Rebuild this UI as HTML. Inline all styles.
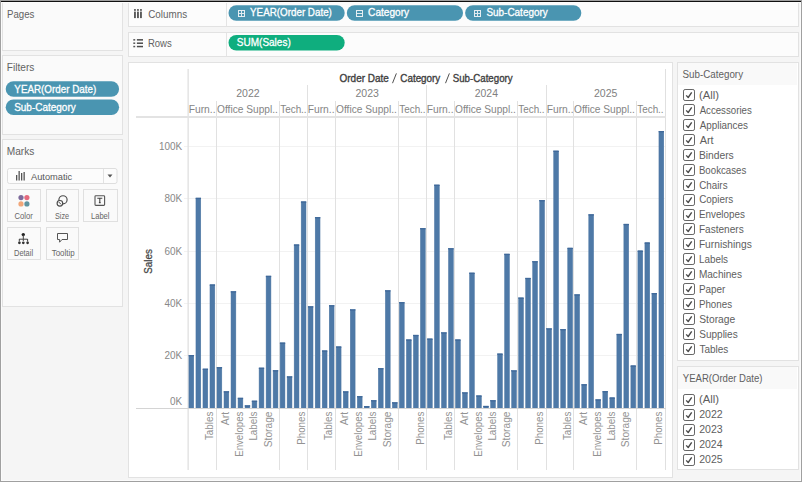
<!DOCTYPE html>
<html><head><meta charset="utf-8"><style>
html,body{margin:0;padding:0;width:802px;height:482px;overflow:hidden;background:#f4f4f4}
svg{display:block;font-family:"Liberation Sans", sans-serif}
</style></head><body>
<svg width="802" height="482" viewBox="0 0 802 482">
<rect x="0" y="0" width="802" height="482" fill="#f5f5f5" />
<rect x="2.5" y="2.5" width="120" height="48" fill="#fafafa" stroke="#e2e2e2" stroke-width="1"/>
<rect x="2.5" y="55.5" width="120" height="79" fill="#fafafa" stroke="#e2e2e2" stroke-width="1"/>
<rect x="2.5" y="139.5" width="120" height="167" fill="#fafafa" stroke="#e2e2e2" stroke-width="1"/>
<rect x="128.5" y="2.5" width="670" height="24" fill="#fcfcfc" stroke="#e2e2e2" stroke-width="1"/>
<rect x="128.5" y="32.5" width="670" height="24" fill="#fcfcfc" stroke="#e2e2e2" stroke-width="1"/>
<rect x="128.5" y="62.5" width="544" height="415" fill="#ffffff" stroke="#e2e2e2" stroke-width="1"/>
<rect x="677.5" y="62.5" width="121" height="298" fill="#ffffff" stroke="#e2e2e2" stroke-width="1"/>
<rect x="677.5" y="366.5" width="121" height="103" fill="#ffffff" stroke="#e2e2e2" stroke-width="1"/>
<rect x="678" y="63" width="119" height="22" fill="#f9f9f9" />
<rect x="678" y="367" width="119" height="22" fill="#f9f9f9" />
<rect x="226" y="3" width="1" height="23" fill="#e4e4e4" />
<rect x="226" y="33" width="1" height="23" fill="#e4e4e4" />
<rect x="0" y="2" width="802" height="1" fill="#fcfcfc" />
<rect x="0" y="0" width="802" height="1" fill="#a0a0a0" />
<rect x="0" y="1" width="802" height="1" fill="#101010" />
<rect x="0" y="0" width="1" height="482" fill="#a0a0a0" />
<rect x="801" y="0" width="1" height="482" fill="#a0a0a0" />
<rect x="0" y="481" width="802" height="1" fill="#a0a0a0" />
<rect x="1" y="2" width="1" height="479" fill="#fbfbfb" />
<rect x="800" y="2" width="1" height="479" fill="#fbfbfb" />
<rect x="1" y="480" width="800" height="1" fill="#fbfbfb" />
<text x="6.98" y="17.6" font-size="10.8" fill="#626262" font-weight="normal" textLength="27.37" lengthAdjust="spacingAndGlyphs"  >Pages</text>
<text x="6.79" y="71.4" font-size="10.8" fill="#626262" font-weight="normal" textLength="27.59" lengthAdjust="spacingAndGlyphs"  >Filters</text>
<text x="6.79" y="155.1" font-size="10.8" fill="#626262" font-weight="normal" textLength="27.59" lengthAdjust="spacingAndGlyphs"  >Marks</text>
<text x="148.21" y="17.6" font-size="10.8" fill="#626262" font-weight="normal" textLength="38.85" lengthAdjust="spacingAndGlyphs"  >Columns</text>
<text x="147.94" y="47.3" font-size="10.8" fill="#626262" font-weight="normal" textLength="23.80" lengthAdjust="spacingAndGlyphs"  >Rows</text>
<rect x="134" y="9.1" width="1.9" height="1.7" fill="#5a5a5a" />
<rect x="134" y="11.6" width="1.9" height="6.5" fill="#5a5a5a" />
<rect x="137" y="9.1" width="1.9" height="1.7" fill="#5a5a5a" />
<rect x="137" y="11.6" width="1.9" height="6.5" fill="#5a5a5a" />
<rect x="140" y="9.1" width="1.9" height="1.7" fill="#5a5a5a" />
<rect x="140" y="11.6" width="1.9" height="6.5" fill="#5a5a5a" />
<rect x="133.3" y="39.1" width="1.9" height="1.5" fill="#555" />
<rect x="136.9" y="39.1" width="6.1" height="1.5" fill="#4a4a4a" />
<rect x="133.3" y="42.45" width="1.9" height="1.5" fill="#555" />
<rect x="136.9" y="42.45" width="6.1" height="1.5" fill="#4a4a4a" />
<rect x="133.3" y="45.800000000000004" width="1.9" height="1.5" fill="#555" />
<rect x="136.9" y="45.800000000000004" width="6.1" height="1.5" fill="#4a4a4a" />
<rect x="228.5" y="5.2" width="116.2" height="15.5" rx="7.75" ry="7.75" fill="#4a95b1"/>
<rect x="238.5" y="10.5" width="6" height="6" fill="none" stroke="#e6eef2" stroke-width="1" shape-rendering="crispEdges"/>
<rect x="239" y="13" width="5" height="1" fill="#dfeaf0" shape-rendering="crispEdges"/>
<rect x="241" y="11" width="1" height="5" fill="#dfeaf0" shape-rendering="crispEdges"/>
<text x="250.05" y="16.2" font-size="10.6" fill="#fff" font-weight="normal" textLength="81.84" lengthAdjust="spacingAndGlyphs" stroke="#fff" stroke-width="0.3" >YEAR(Order Date)</text>
<rect x="346.8" y="5.2" width="116.2" height="15.5" rx="7.75" ry="7.75" fill="#4a95b1"/>
<rect x="356.5" y="10.5" width="6" height="6" fill="none" stroke="#e6eef2" stroke-width="1" shape-rendering="crispEdges"/>
<rect x="357" y="13" width="5" height="1" fill="#dfeaf0" shape-rendering="crispEdges"/>
<text x="368.09" y="16.2" font-size="10.6" fill="#fff" font-weight="normal" textLength="41.03" lengthAdjust="spacingAndGlyphs" stroke="#fff" stroke-width="0.3" >Category</text>
<rect x="465.1" y="5.2" width="116.2" height="15.5" rx="7.75" ry="7.75" fill="#4a95b1"/>
<rect x="474.5" y="10.5" width="6" height="6" fill="none" stroke="#e6eef2" stroke-width="1" shape-rendering="crispEdges"/>
<rect x="475" y="13" width="5" height="1" fill="#dfeaf0" shape-rendering="crispEdges"/>
<rect x="477" y="11" width="1" height="5" fill="#dfeaf0" shape-rendering="crispEdges"/>
<text x="486.45" y="16.2" font-size="10.6" fill="#fff" font-weight="normal" textLength="61.30" lengthAdjust="spacingAndGlyphs" stroke="#fff" stroke-width="0.3" >Sub-Category</text>
<rect x="228.5" y="34.9" width="116.2" height="15.6" rx="7.8" ry="7.8" fill="#0fae7e"/>
<text x="236.85" y="46.2" font-size="10.6" fill="#fff" font-weight="normal" textLength="53.90" lengthAdjust="spacingAndGlyphs" stroke="#fff" stroke-width="0.3" >SUM(Sales)</text>
<rect x="5.7" y="81.3" width="113.4" height="15.5" rx="7.75" ry="7.75" fill="#4a95b1"/>
<text x="14.35" y="92.6" font-size="10.6" fill="#fff" font-weight="normal" textLength="81.84" lengthAdjust="spacingAndGlyphs" stroke="#fff" stroke-width="0.3" >YEAR(Order Date)</text>
<rect x="5.7" y="99.6" width="113.4" height="15.4" rx="7.7" ry="7.7" fill="#4a95b1"/>
<text x="14.15" y="110.9" font-size="10.6" fill="#fff" font-weight="normal" textLength="61.60" lengthAdjust="spacingAndGlyphs" stroke="#fff" stroke-width="0.3" >Sub-Category</text>
<rect x="7.5" y="168.5" width="109.5" height="15" rx="2" fill="#fcfcfc" stroke="#dedede"/>
<rect x="103" y="169" width="1" height="14" fill="#e2e2e2" />
<path d="M107.5 174.5 L112.5 174.5 L110 177.5 Z" fill="#555"/>
<rect x="16" y="175" width="1.3" height="5.5" fill="#555" />
<rect x="18.5" y="171" width="1.3" height="9.5" fill="#555" />
<rect x="21" y="173" width="1.3" height="7.5" fill="#555" />
<rect x="23.5" y="172" width="1.3" height="8.5" fill="#555" />
<text x="30.95" y="180.1" font-size="9.7" fill="#595959" font-weight="normal" textLength="41.29" lengthAdjust="spacingAndGlyphs"  >Automatic</text>
<rect x="7.5" y="189.5" width="33" height="32" fill="#fafafa" stroke="#e0e0e0"/>
<rect x="46.5" y="189.5" width="32" height="32" fill="#fafafa" stroke="#e0e0e0"/>
<rect x="83.5" y="189.5" width="34" height="32" fill="#fafafa" stroke="#e0e0e0"/>
<rect x="7.5" y="227.5" width="33" height="32" fill="#fafafa" stroke="#e0e0e0"/>
<rect x="46.5" y="227.5" width="32" height="32" fill="#fafafa" stroke="#e0e0e0"/>
<text x="14.62" y="218.5" font-size="8.6" fill="#666" font-weight="normal" textLength="18.23" lengthAdjust="spacingAndGlyphs"  >Color</text>
<text x="54.97" y="218.5" font-size="8.6" fill="#666" font-weight="normal" textLength="14.16" lengthAdjust="spacingAndGlyphs"  >Size</text>
<text x="90.99" y="218.5" font-size="8.6" fill="#666" font-weight="normal" textLength="18.51" lengthAdjust="spacingAndGlyphs"  >Label</text>
<text x="14.00" y="255.8" font-size="8.6" fill="#666" font-weight="normal" textLength="19.10" lengthAdjust="spacingAndGlyphs"  >Detail</text>
<text x="51.70" y="255.8" font-size="8.6" fill="#666" font-weight="normal" textLength="22.92" lengthAdjust="spacingAndGlyphs"  >Tooltip</text>
<circle cx="21" cy="197.6" r="2.6" fill="#7d6a9b"/>
<circle cx="26.9" cy="197.6" r="2.6" fill="#e46a7e"/>
<circle cx="21" cy="203.9" r="2.6" fill="#f1a77a"/>
<circle cx="26.9" cy="203.9" r="2.6" fill="#5f939f"/>
<circle cx="63" cy="199.8" r="4.1" fill="none" stroke="#4a4a4a" stroke-width="1.15"/>
<circle cx="59.9" cy="203.3" r="2.8" fill="#fafafa" stroke="#4a4a4a" stroke-width="1.15"/>
<path d="M58.6 201.9 L61.1 204.4" stroke="#4a4a4a" stroke-width="1"/>
<rect x="95" y="195.8" width="9.6" height="9.6" rx="0.8" fill="none" stroke="#555" stroke-width="1.1"/>
<path d="M97.3 198.3 H102.3 M99.8 198.3 V202.6 M98.9 202.6 H100.7" stroke="#444" stroke-width="1.1" fill="none"/>
<circle cx="23.3" cy="234.6" r="1.7" fill="#222"/>
<path d="M23.3 235 V241 M19.2 239.2 H27.6 M19.3 239 V241.5 M27.6 239 V241.5" stroke="#444" stroke-width="1.0" fill="none"/>
<circle cx="19.4" cy="242.8" r="1.35" fill="#333"/>
<circle cx="23.3" cy="242.8" r="1.35" fill="#333"/>
<circle cx="27.6" cy="242.8" r="1.35" fill="#333"/>
<path d="M57.5 233.5 H67.5 V239.5 H62 L59.6 242.2 V239.5 H57.5 Z" fill="none" stroke="#555" stroke-width="1" stroke-linejoin="round"/>
<rect x="184" y="355" width="481" height="1" fill="#f2f2f2" />
<rect x="184" y="303" width="481" height="1" fill="#f2f2f2" />
<rect x="184" y="251" width="481" height="1" fill="#f2f2f2" />
<rect x="184" y="198" width="481" height="1" fill="#f2f2f2" />
<rect x="184" y="146" width="481" height="1" fill="#f2f2f2" />
<rect x="187.5" y="69" width="1.3" height="401" fill="#e0e0e0" />
<rect x="665" y="69" width="1" height="401" fill="#e0e0e0" />
<rect x="307" y="85" width="1" height="385" fill="#e1e1e1" />
<rect x="426" y="85" width="1" height="385" fill="#e1e1e1" />
<rect x="546" y="85" width="1" height="385" fill="#e1e1e1" />
<rect x="216" y="101" width="1" height="369" fill="#e1e1e1" />
<rect x="279" y="101" width="1" height="369" fill="#e1e1e1" />
<rect x="335" y="101" width="1" height="369" fill="#e1e1e1" />
<rect x="398" y="101" width="1" height="369" fill="#e1e1e1" />
<rect x="454" y="101" width="1" height="369" fill="#e1e1e1" />
<rect x="517" y="101" width="1" height="369" fill="#e1e1e1" />
<rect x="573" y="101" width="1" height="369" fill="#e1e1e1" />
<rect x="636" y="101" width="1" height="369" fill="#e1e1e1" />
<rect x="136" y="116" width="530" height="2" fill="#e3e3e3" />
<rect x="188.95" y="355.25" width="4.8" height="53.00" fill="#4e79a7" stroke="#4a74a2" stroke-width="0.5"/>
<rect x="188.70" y="355.0" width="5.3" height="1.3" fill="#40699a"/>
<rect x="195.96" y="198.05" width="4.8" height="210.20" fill="#4e79a7" stroke="#4a74a2" stroke-width="0.5"/>
<rect x="195.71" y="197.8" width="5.3" height="1.3" fill="#40699a"/>
<rect x="202.98" y="368.95" width="4.8" height="39.30" fill="#4e79a7" stroke="#4a74a2" stroke-width="0.5"/>
<rect x="202.73" y="368.7" width="5.3" height="1.3" fill="#40699a"/>
<rect x="209.99" y="284.75" width="4.8" height="123.50" fill="#4e79a7" stroke="#4a74a2" stroke-width="0.5"/>
<rect x="209.74" y="284.5" width="5.3" height="1.3" fill="#40699a"/>
<rect x="217.01" y="367.35" width="4.8" height="40.90" fill="#4e79a7" stroke="#4a74a2" stroke-width="0.5"/>
<rect x="216.76" y="367.1" width="5.3" height="1.3" fill="#40699a"/>
<rect x="224.02" y="391.55" width="4.8" height="16.70" fill="#4e79a7" stroke="#4a74a2" stroke-width="0.5"/>
<rect x="223.77" y="391.3" width="5.3" height="1.3" fill="#40699a"/>
<rect x="231.04" y="291.55" width="4.8" height="116.70" fill="#4e79a7" stroke="#4a74a2" stroke-width="0.5"/>
<rect x="230.79" y="291.3" width="5.3" height="1.3" fill="#40699a"/>
<rect x="238.05" y="398.05" width="4.8" height="10.20" fill="#4e79a7" stroke="#4a74a2" stroke-width="0.5"/>
<rect x="237.80" y="397.8" width="5.3" height="1.3" fill="#40699a"/>
<rect x="245.07" y="405.65" width="4.8" height="2.60" fill="#4e79a7" stroke="#4a74a2" stroke-width="0.5"/>
<rect x="244.82" y="405.4" width="5.3" height="1.3" fill="#40699a"/>
<rect x="252.08" y="400.95" width="4.8" height="7.30" fill="#4e79a7" stroke="#4a74a2" stroke-width="0.5"/>
<rect x="251.83" y="400.7" width="5.3" height="1.3" fill="#40699a"/>
<rect x="259.10" y="367.95" width="4.8" height="40.30" fill="#4e79a7" stroke="#4a74a2" stroke-width="0.5"/>
<rect x="258.85" y="367.7" width="5.3" height="1.3" fill="#40699a"/>
<rect x="266.12" y="276.05" width="4.8" height="132.20" fill="#4e79a7" stroke="#4a74a2" stroke-width="0.5"/>
<rect x="265.87" y="275.8" width="5.3" height="1.3" fill="#40699a"/>
<rect x="273.13" y="370.45" width="4.8" height="37.80" fill="#4e79a7" stroke="#4a74a2" stroke-width="0.5"/>
<rect x="272.88" y="370.2" width="5.3" height="1.3" fill="#40699a"/>
<rect x="280.14" y="342.85" width="4.8" height="65.40" fill="#4e79a7" stroke="#4a74a2" stroke-width="0.5"/>
<rect x="279.89" y="342.6" width="5.3" height="1.3" fill="#40699a"/>
<rect x="287.16" y="376.65" width="4.8" height="31.60" fill="#4e79a7" stroke="#4a74a2" stroke-width="0.5"/>
<rect x="286.91" y="376.4" width="5.3" height="1.3" fill="#40699a"/>
<rect x="294.17" y="244.75" width="4.8" height="163.50" fill="#4e79a7" stroke="#4a74a2" stroke-width="0.5"/>
<rect x="293.92" y="244.5" width="5.3" height="1.3" fill="#40699a"/>
<rect x="301.19" y="201.75" width="4.8" height="206.50" fill="#4e79a7" stroke="#4a74a2" stroke-width="0.5"/>
<rect x="300.94" y="201.5" width="5.3" height="1.3" fill="#40699a"/>
<rect x="308.20" y="306.55" width="4.8" height="101.70" fill="#4e79a7" stroke="#4a74a2" stroke-width="0.5"/>
<rect x="307.95" y="306.3" width="5.3" height="1.3" fill="#40699a"/>
<rect x="315.22" y="217.35" width="4.8" height="190.90" fill="#4e79a7" stroke="#4a74a2" stroke-width="0.5"/>
<rect x="314.97" y="217.1" width="5.3" height="1.3" fill="#40699a"/>
<rect x="322.24" y="350.75" width="4.8" height="57.50" fill="#4e79a7" stroke="#4a74a2" stroke-width="0.5"/>
<rect x="321.99" y="350.5" width="5.3" height="1.3" fill="#40699a"/>
<rect x="329.25" y="305.45" width="4.8" height="102.80" fill="#4e79a7" stroke="#4a74a2" stroke-width="0.5"/>
<rect x="329.00" y="305.2" width="5.3" height="1.3" fill="#40699a"/>
<rect x="336.26" y="346.75" width="4.8" height="61.50" fill="#4e79a7" stroke="#4a74a2" stroke-width="0.5"/>
<rect x="336.01" y="346.5" width="5.3" height="1.3" fill="#40699a"/>
<rect x="343.28" y="391.65" width="4.8" height="16.60" fill="#4e79a7" stroke="#4a74a2" stroke-width="0.5"/>
<rect x="343.03" y="391.4" width="5.3" height="1.3" fill="#40699a"/>
<rect x="350.29" y="309.65" width="4.8" height="98.60" fill="#4e79a7" stroke="#4a74a2" stroke-width="0.5"/>
<rect x="350.04" y="309.4" width="5.3" height="1.3" fill="#40699a"/>
<rect x="357.31" y="396.35" width="4.8" height="11.90" fill="#4e79a7" stroke="#4a74a2" stroke-width="0.5"/>
<rect x="357.06" y="396.1" width="5.3" height="1.3" fill="#40699a"/>
<rect x="364.32" y="406.35" width="4.8" height="1.90" fill="#4e79a7" stroke="#4a74a2" stroke-width="0.5"/>
<rect x="364.07" y="406.1" width="5.3" height="1.3" fill="#40699a"/>
<rect x="371.34" y="400.45" width="4.8" height="7.80" fill="#4e79a7" stroke="#4a74a2" stroke-width="0.5"/>
<rect x="371.09" y="400.2" width="5.3" height="1.3" fill="#40699a"/>
<rect x="378.36" y="368.35" width="4.8" height="39.90" fill="#4e79a7" stroke="#4a74a2" stroke-width="0.5"/>
<rect x="378.11" y="368.1" width="5.3" height="1.3" fill="#40699a"/>
<rect x="385.37" y="290.55" width="4.8" height="117.70" fill="#4e79a7" stroke="#4a74a2" stroke-width="0.5"/>
<rect x="385.12" y="290.3" width="5.3" height="1.3" fill="#40699a"/>
<rect x="392.38" y="402.55" width="4.8" height="5.70" fill="#4e79a7" stroke="#4a74a2" stroke-width="0.5"/>
<rect x="392.13" y="402.3" width="5.3" height="1.3" fill="#40699a"/>
<rect x="399.40" y="302.35" width="4.8" height="105.90" fill="#4e79a7" stroke="#4a74a2" stroke-width="0.5"/>
<rect x="399.15" y="302.1" width="5.3" height="1.3" fill="#40699a"/>
<rect x="406.41" y="339.75" width="4.8" height="68.50" fill="#4e79a7" stroke="#4a74a2" stroke-width="0.5"/>
<rect x="406.16" y="339.5" width="5.3" height="1.3" fill="#40699a"/>
<rect x="413.43" y="335.15" width="4.8" height="73.10" fill="#4e79a7" stroke="#4a74a2" stroke-width="0.5"/>
<rect x="413.18" y="334.9" width="5.3" height="1.3" fill="#40699a"/>
<rect x="420.44" y="228.35" width="4.8" height="179.90" fill="#4e79a7" stroke="#4a74a2" stroke-width="0.5"/>
<rect x="420.19" y="228.1" width="5.3" height="1.3" fill="#40699a"/>
<rect x="427.46" y="338.85" width="4.8" height="69.40" fill="#4e79a7" stroke="#4a74a2" stroke-width="0.5"/>
<rect x="427.21" y="338.6" width="5.3" height="1.3" fill="#40699a"/>
<rect x="434.47" y="184.95" width="4.8" height="223.30" fill="#4e79a7" stroke="#4a74a2" stroke-width="0.5"/>
<rect x="434.22" y="184.7" width="5.3" height="1.3" fill="#40699a"/>
<rect x="441.49" y="332.65" width="4.8" height="75.60" fill="#4e79a7" stroke="#4a74a2" stroke-width="0.5"/>
<rect x="441.24" y="332.4" width="5.3" height="1.3" fill="#40699a"/>
<rect x="448.50" y="248.45" width="4.8" height="159.80" fill="#4e79a7" stroke="#4a74a2" stroke-width="0.5"/>
<rect x="448.25" y="248.2" width="5.3" height="1.3" fill="#40699a"/>
<rect x="455.52" y="339.75" width="4.8" height="68.50" fill="#4e79a7" stroke="#4a74a2" stroke-width="0.5"/>
<rect x="455.27" y="339.5" width="5.3" height="1.3" fill="#40699a"/>
<rect x="462.53" y="392.65" width="4.8" height="15.60" fill="#4e79a7" stroke="#4a74a2" stroke-width="0.5"/>
<rect x="462.28" y="392.4" width="5.3" height="1.3" fill="#40699a"/>
<rect x="469.55" y="272.95" width="4.8" height="135.30" fill="#4e79a7" stroke="#4a74a2" stroke-width="0.5"/>
<rect x="469.30" y="272.7" width="5.3" height="1.3" fill="#40699a"/>
<rect x="476.56" y="395.75" width="4.8" height="12.50" fill="#4e79a7" stroke="#4a74a2" stroke-width="0.5"/>
<rect x="476.31" y="395.5" width="5.3" height="1.3" fill="#40699a"/>
<rect x="483.58" y="406.15" width="4.8" height="2.10" fill="#4e79a7" stroke="#4a74a2" stroke-width="0.5"/>
<rect x="483.33" y="405.9" width="5.3" height="1.3" fill="#40699a"/>
<rect x="490.59" y="400.45" width="4.8" height="7.80" fill="#4e79a7" stroke="#4a74a2" stroke-width="0.5"/>
<rect x="490.34" y="400.2" width="5.3" height="1.3" fill="#40699a"/>
<rect x="497.61" y="353.85" width="4.8" height="54.40" fill="#4e79a7" stroke="#4a74a2" stroke-width="0.5"/>
<rect x="497.36" y="353.6" width="5.3" height="1.3" fill="#40699a"/>
<rect x="504.62" y="254.05" width="4.8" height="154.20" fill="#4e79a7" stroke="#4a74a2" stroke-width="0.5"/>
<rect x="504.38" y="253.8" width="5.3" height="1.3" fill="#40699a"/>
<rect x="511.64" y="370.65" width="4.8" height="37.60" fill="#4e79a7" stroke="#4a74a2" stroke-width="0.5"/>
<rect x="511.39" y="370.4" width="5.3" height="1.3" fill="#40699a"/>
<rect x="518.65" y="297.85" width="4.8" height="110.40" fill="#4e79a7" stroke="#4a74a2" stroke-width="0.5"/>
<rect x="518.40" y="297.6" width="5.3" height="1.3" fill="#40699a"/>
<rect x="525.67" y="278.15" width="4.8" height="130.10" fill="#4e79a7" stroke="#4a74a2" stroke-width="0.5"/>
<rect x="525.42" y="277.9" width="5.3" height="1.3" fill="#40699a"/>
<rect x="532.68" y="261.45" width="4.8" height="146.80" fill="#4e79a7" stroke="#4a74a2" stroke-width="0.5"/>
<rect x="532.43" y="261.2" width="5.3" height="1.3" fill="#40699a"/>
<rect x="539.70" y="200.35" width="4.8" height="207.90" fill="#4e79a7" stroke="#4a74a2" stroke-width="0.5"/>
<rect x="539.45" y="200.1" width="5.3" height="1.3" fill="#40699a"/>
<rect x="546.71" y="328.65" width="4.8" height="79.60" fill="#4e79a7" stroke="#4a74a2" stroke-width="0.5"/>
<rect x="546.46" y="328.4" width="5.3" height="1.3" fill="#40699a"/>
<rect x="553.73" y="150.95" width="4.8" height="257.30" fill="#4e79a7" stroke="#4a74a2" stroke-width="0.5"/>
<rect x="553.48" y="150.7" width="5.3" height="1.3" fill="#40699a"/>
<rect x="560.74" y="329.35" width="4.8" height="78.90" fill="#4e79a7" stroke="#4a74a2" stroke-width="0.5"/>
<rect x="560.49" y="329.1" width="5.3" height="1.3" fill="#40699a"/>
<rect x="567.76" y="248.05" width="4.8" height="160.20" fill="#4e79a7" stroke="#4a74a2" stroke-width="0.5"/>
<rect x="567.51" y="247.8" width="5.3" height="1.3" fill="#40699a"/>
<rect x="574.77" y="294.65" width="4.8" height="113.60" fill="#4e79a7" stroke="#4a74a2" stroke-width="0.5"/>
<rect x="574.52" y="294.4" width="5.3" height="1.3" fill="#40699a"/>
<rect x="581.79" y="384.45" width="4.8" height="23.80" fill="#4e79a7" stroke="#4a74a2" stroke-width="0.5"/>
<rect x="581.54" y="384.2" width="5.3" height="1.3" fill="#40699a"/>
<rect x="588.80" y="214.55" width="4.8" height="193.70" fill="#4e79a7" stroke="#4a74a2" stroke-width="0.5"/>
<rect x="588.55" y="214.3" width="5.3" height="1.3" fill="#40699a"/>
<rect x="595.82" y="399.65" width="4.8" height="8.60" fill="#4e79a7" stroke="#4a74a2" stroke-width="0.5"/>
<rect x="595.57" y="399.4" width="5.3" height="1.3" fill="#40699a"/>
<rect x="602.84" y="391.35" width="4.8" height="16.90" fill="#4e79a7" stroke="#4a74a2" stroke-width="0.5"/>
<rect x="602.59" y="391.1" width="5.3" height="1.3" fill="#40699a"/>
<rect x="609.85" y="397.75" width="4.8" height="10.50" fill="#4e79a7" stroke="#4a74a2" stroke-width="0.5"/>
<rect x="609.60" y="397.5" width="5.3" height="1.3" fill="#40699a"/>
<rect x="616.87" y="334.15" width="4.8" height="74.10" fill="#4e79a7" stroke="#4a74a2" stroke-width="0.5"/>
<rect x="616.62" y="333.9" width="5.3" height="1.3" fill="#40699a"/>
<rect x="623.88" y="224.15" width="4.8" height="184.10" fill="#4e79a7" stroke="#4a74a2" stroke-width="0.5"/>
<rect x="623.63" y="223.9" width="5.3" height="1.3" fill="#40699a"/>
<rect x="630.89" y="365.75" width="4.8" height="42.50" fill="#4e79a7" stroke="#4a74a2" stroke-width="0.5"/>
<rect x="630.64" y="365.5" width="5.3" height="1.3" fill="#40699a"/>
<rect x="637.91" y="250.85" width="4.8" height="157.40" fill="#4e79a7" stroke="#4a74a2" stroke-width="0.5"/>
<rect x="637.66" y="250.6" width="5.3" height="1.3" fill="#40699a"/>
<rect x="644.92" y="242.75" width="4.8" height="165.50" fill="#4e79a7" stroke="#4a74a2" stroke-width="0.5"/>
<rect x="644.67" y="242.5" width="5.3" height="1.3" fill="#40699a"/>
<rect x="651.94" y="293.25" width="4.8" height="115.00" fill="#4e79a7" stroke="#4a74a2" stroke-width="0.5"/>
<rect x="651.69" y="293.0" width="5.3" height="1.3" fill="#40699a"/>
<rect x="658.95" y="131.25" width="4.8" height="277.00" fill="#4e79a7" stroke="#4a74a2" stroke-width="0.5"/>
<rect x="658.70" y="131.0" width="5.3" height="1.3" fill="#40699a"/>
<rect x="136" y="408" width="530" height="1" fill="#d4d4d4" />
<text x="170.07" y="404.8" font-size="10.6" fill="#888" font-weight="normal" textLength="12.16" lengthAdjust="spacingAndGlyphs"  >0K</text>
<text x="164.56" y="358.75" font-size="10.6" fill="#888" font-weight="normal" textLength="17.69" lengthAdjust="spacingAndGlyphs"  >20K</text>
<text x="164.56" y="306.75" font-size="10.6" fill="#888" font-weight="normal" textLength="17.69" lengthAdjust="spacingAndGlyphs"  >40K</text>
<text x="164.56" y="254.75" font-size="10.6" fill="#888" font-weight="normal" textLength="17.69" lengthAdjust="spacingAndGlyphs"  >60K</text>
<text x="164.56" y="201.75" font-size="10.6" fill="#888" font-weight="normal" textLength="17.69" lengthAdjust="spacingAndGlyphs"  >80K</text>
<text x="158.99" y="149.75" font-size="10.6" fill="#888" font-weight="normal" textLength="23.21" lengthAdjust="spacingAndGlyphs"  >100K</text>
<text x="339.55" y="81.5" font-size="10.6" fill="#404040" font-weight="normal" textLength="49.31" lengthAdjust="spacingAndGlyphs" stroke="#404040" stroke-width="0.35" >Order Date</text>
<text x="400.31" y="81.5" font-size="10.6" fill="#404040" font-weight="normal" textLength="40.02" lengthAdjust="spacingAndGlyphs" stroke="#404040" stroke-width="0.35" >Category</text>
<text x="452.76" y="81.5" font-size="10.6" fill="#404040" font-weight="normal" textLength="59.89" lengthAdjust="spacingAndGlyphs" stroke="#404040" stroke-width="0.35" >Sub-Category</text>
<path d="M392.5 83.2 L396.4 73.4 M445.5 83.2 L449.4 73.4" stroke="#505050" stroke-width="1.0" fill="none"/>
<text x="236.20" y="97.0" font-size="10.2" fill="#808080" font-weight="normal" textLength="23.45" lengthAdjust="spacingAndGlyphs"  >2022</text>
<text x="188.68" y="113.0" font-size="10.8" fill="#858585" font-weight="normal" textLength="26.87" lengthAdjust="spacingAndGlyphs"  >Furn..</text>
<text x="217.04" y="113.0" font-size="10.8" fill="#858585" font-weight="normal" textLength="60.82" lengthAdjust="spacingAndGlyphs"  >Office Suppl..</text>
<text x="280.25" y="113.0" font-size="10.8" fill="#858585" font-weight="normal" textLength="26.37" lengthAdjust="spacingAndGlyphs"  >Tech..</text>
<text x="355.45" y="97.0" font-size="10.2" fill="#808080" font-weight="normal" textLength="23.40" lengthAdjust="spacingAndGlyphs"  >2023</text>
<text x="307.68" y="113.0" font-size="10.8" fill="#858585" font-weight="normal" textLength="26.87" lengthAdjust="spacingAndGlyphs"  >Furn..</text>
<text x="336.04" y="113.0" font-size="10.8" fill="#858585" font-weight="normal" textLength="60.82" lengthAdjust="spacingAndGlyphs"  >Office Suppl..</text>
<text x="399.25" y="113.0" font-size="10.8" fill="#858585" font-weight="normal" textLength="26.37" lengthAdjust="spacingAndGlyphs"  >Tech..</text>
<text x="474.72" y="97.0" font-size="10.2" fill="#808080" font-weight="normal" textLength="23.23" lengthAdjust="spacingAndGlyphs"  >2024</text>
<text x="426.68" y="113.0" font-size="10.8" fill="#858585" font-weight="normal" textLength="26.87" lengthAdjust="spacingAndGlyphs"  >Furn..</text>
<text x="455.04" y="113.0" font-size="10.8" fill="#858585" font-weight="normal" textLength="60.82" lengthAdjust="spacingAndGlyphs"  >Office Suppl..</text>
<text x="518.25" y="113.0" font-size="10.8" fill="#858585" font-weight="normal" textLength="26.37" lengthAdjust="spacingAndGlyphs"  >Tech..</text>
<text x="593.97" y="97.0" font-size="10.2" fill="#808080" font-weight="normal" textLength="23.34" lengthAdjust="spacingAndGlyphs"  >2025</text>
<text x="546.68" y="113.0" font-size="10.8" fill="#858585" font-weight="normal" textLength="26.87" lengthAdjust="spacingAndGlyphs"  >Furn..</text>
<text x="574.04" y="113.0" font-size="10.8" fill="#858585" font-weight="normal" textLength="60.82" lengthAdjust="spacingAndGlyphs"  >Office Suppl..</text>
<text x="637.25" y="113.0" font-size="10.8" fill="#858585" font-weight="normal" textLength="26.37" lengthAdjust="spacingAndGlyphs"  >Tech..</text>
<text transform="translate(213.10,440.05) rotate(-90)" font-size="10.3" fill="#939393" font-weight="normal" textLength="28.40" lengthAdjust="spacingAndGlyphs" >Tables</text>
<text transform="translate(229.20,425.15) rotate(-90)" font-size="10.3" fill="#939393" font-weight="normal" textLength="13.23" lengthAdjust="spacingAndGlyphs" >Art</text>
<text transform="translate(243.20,456.77) rotate(-90)" font-size="10.3" fill="#939393" font-weight="normal" textLength="45.11" lengthAdjust="spacingAndGlyphs" >Envelopes</text>
<text transform="translate(257.10,440.59) rotate(-90)" font-size="10.3" fill="#939393" font-weight="normal" textLength="28.95" lengthAdjust="spacingAndGlyphs" >Labels</text>
<text transform="translate(271.50,447.16) rotate(-90)" font-size="10.3" fill="#939393" font-weight="normal" textLength="35.64" lengthAdjust="spacingAndGlyphs" >Storage</text>
<text transform="translate(304.70,444.78) rotate(-90)" font-size="10.3" fill="#939393" font-weight="normal" textLength="33.14" lengthAdjust="spacingAndGlyphs" >Phones</text>
<text transform="translate(332.36,440.05) rotate(-90)" font-size="10.3" fill="#939393" font-weight="normal" textLength="28.40" lengthAdjust="spacingAndGlyphs" >Tables</text>
<text transform="translate(348.46,425.15) rotate(-90)" font-size="10.3" fill="#939393" font-weight="normal" textLength="13.23" lengthAdjust="spacingAndGlyphs" >Art</text>
<text transform="translate(362.46,456.77) rotate(-90)" font-size="10.3" fill="#939393" font-weight="normal" textLength="45.11" lengthAdjust="spacingAndGlyphs" >Envelopes</text>
<text transform="translate(376.36,440.59) rotate(-90)" font-size="10.3" fill="#939393" font-weight="normal" textLength="28.95" lengthAdjust="spacingAndGlyphs" >Labels</text>
<text transform="translate(390.76,447.16) rotate(-90)" font-size="10.3" fill="#939393" font-weight="normal" textLength="35.64" lengthAdjust="spacingAndGlyphs" >Storage</text>
<text transform="translate(423.96,444.78) rotate(-90)" font-size="10.3" fill="#939393" font-weight="normal" textLength="33.14" lengthAdjust="spacingAndGlyphs" >Phones</text>
<text transform="translate(451.62,440.05) rotate(-90)" font-size="10.3" fill="#939393" font-weight="normal" textLength="28.40" lengthAdjust="spacingAndGlyphs" >Tables</text>
<text transform="translate(467.72,425.15) rotate(-90)" font-size="10.3" fill="#939393" font-weight="normal" textLength="13.23" lengthAdjust="spacingAndGlyphs" >Art</text>
<text transform="translate(481.72,456.77) rotate(-90)" font-size="10.3" fill="#939393" font-weight="normal" textLength="45.11" lengthAdjust="spacingAndGlyphs" >Envelopes</text>
<text transform="translate(495.62,440.59) rotate(-90)" font-size="10.3" fill="#939393" font-weight="normal" textLength="28.95" lengthAdjust="spacingAndGlyphs" >Labels</text>
<text transform="translate(510.02,447.16) rotate(-90)" font-size="10.3" fill="#939393" font-weight="normal" textLength="35.64" lengthAdjust="spacingAndGlyphs" >Storage</text>
<text transform="translate(543.22,444.78) rotate(-90)" font-size="10.3" fill="#939393" font-weight="normal" textLength="33.14" lengthAdjust="spacingAndGlyphs" >Phones</text>
<text transform="translate(570.88,440.05) rotate(-90)" font-size="10.3" fill="#939393" font-weight="normal" textLength="28.40" lengthAdjust="spacingAndGlyphs" >Tables</text>
<text transform="translate(586.98,425.15) rotate(-90)" font-size="10.3" fill="#939393" font-weight="normal" textLength="13.23" lengthAdjust="spacingAndGlyphs" >Art</text>
<text transform="translate(600.98,456.77) rotate(-90)" font-size="10.3" fill="#939393" font-weight="normal" textLength="45.11" lengthAdjust="spacingAndGlyphs" >Envelopes</text>
<text transform="translate(614.88,440.59) rotate(-90)" font-size="10.3" fill="#939393" font-weight="normal" textLength="28.95" lengthAdjust="spacingAndGlyphs" >Labels</text>
<text transform="translate(629.28,447.16) rotate(-90)" font-size="10.3" fill="#939393" font-weight="normal" textLength="35.64" lengthAdjust="spacingAndGlyphs" >Storage</text>
<text transform="translate(662.48,444.78) rotate(-90)" font-size="10.3" fill="#939393" font-weight="normal" textLength="33.14" lengthAdjust="spacingAndGlyphs" >Phones</text>
<text transform="translate(151.60,273.64) rotate(-90)" font-size="10.6" fill="#4a4a4a" font-weight="normal" textLength="24.40" lengthAdjust="spacingAndGlyphs" stroke="#4a4a4a" stroke-width="0.3">Sales</text>
<text x="682.56" y="77.5" font-size="10.8" fill="#606060" font-weight="normal" textLength="60.49" lengthAdjust="spacingAndGlyphs"  >Sub-Category</text>
<text x="682.76" y="381.9" font-size="10.8" fill="#606060" font-weight="normal" textLength="79.72" lengthAdjust="spacingAndGlyphs"  >YEAR(Order Date)</text>
<rect x="683.5" y="89.5" width="11" height="11" rx="1.6" fill="#fff" stroke="#666" stroke-width="1"/>
<path d="M686.2 95.4 L688.2 97.5 L691.7 92.3" fill="none" stroke="#4a4a4a" stroke-width="1.35" stroke-linejoin="round"/>
<text x="699.02" y="98.9" font-size="10.8" fill="#5e5e5e" font-weight="normal" textLength="20.08" lengthAdjust="spacingAndGlyphs"  >(All)</text>
<rect x="683.5" y="104.5" width="11" height="11" rx="1.6" fill="#fff" stroke="#666" stroke-width="1"/>
<path d="M686.2 110.4 L688.2 112.5 L691.7 107.3" fill="none" stroke="#4a4a4a" stroke-width="1.35" stroke-linejoin="round"/>
<text x="699.65" y="113.84" font-size="10.8" fill="#5e5e5e" font-weight="normal" textLength="52.09" lengthAdjust="spacingAndGlyphs"  >Accessories</text>
<rect x="683.5" y="119.5" width="11" height="11" rx="1.6" fill="#fff" stroke="#666" stroke-width="1"/>
<path d="M686.2 125.4 L688.2 127.5 L691.7 122.3" fill="none" stroke="#4a4a4a" stroke-width="1.35" stroke-linejoin="round"/>
<text x="699.65" y="128.78" font-size="10.8" fill="#5e5e5e" font-weight="normal" textLength="48.32" lengthAdjust="spacingAndGlyphs"  >Appliances</text>
<rect x="683.5" y="134.5" width="11" height="11" rx="1.6" fill="#fff" stroke="#666" stroke-width="1"/>
<path d="M686.2 140.4 L688.2 142.5 L691.7 137.3" fill="none" stroke="#4a4a4a" stroke-width="1.35" stroke-linejoin="round"/>
<text x="699.65" y="143.72" font-size="10.8" fill="#5e5e5e" font-weight="normal" textLength="13.94" lengthAdjust="spacingAndGlyphs"  >Art</text>
<rect x="683.5" y="149.5" width="11" height="11" rx="1.6" fill="#fff" stroke="#666" stroke-width="1"/>
<path d="M686.2 155.4 L688.2 157.5 L691.7 152.3" fill="none" stroke="#4a4a4a" stroke-width="1.35" stroke-linejoin="round"/>
<text x="698.88" y="158.66" font-size="10.8" fill="#5e5e5e" font-weight="normal" textLength="34.89" lengthAdjust="spacingAndGlyphs"  >Binders</text>
<rect x="683.5" y="164.5" width="11" height="11" rx="1.6" fill="#fff" stroke="#666" stroke-width="1"/>
<path d="M686.2 170.4 L688.2 172.5 L691.7 167.3" fill="none" stroke="#4a4a4a" stroke-width="1.35" stroke-linejoin="round"/>
<text x="698.93" y="173.6" font-size="10.8" fill="#5e5e5e" font-weight="normal" textLength="47.33" lengthAdjust="spacingAndGlyphs"  >Bookcases</text>
<rect x="683.5" y="179.5" width="11" height="11" rx="1.6" fill="#fff" stroke="#666" stroke-width="1"/>
<path d="M686.2 185.4 L688.2 187.5 L691.7 182.3" fill="none" stroke="#4a4a4a" stroke-width="1.35" stroke-linejoin="round"/>
<text x="699.21" y="188.54" font-size="10.8" fill="#5e5e5e" font-weight="normal" textLength="28.33" lengthAdjust="spacingAndGlyphs"  >Chairs</text>
<rect x="683.5" y="194.5" width="11" height="11" rx="1.6" fill="#fff" stroke="#666" stroke-width="1"/>
<path d="M686.2 200.4 L688.2 202.5 L691.7 197.3" fill="none" stroke="#4a4a4a" stroke-width="1.35" stroke-linejoin="round"/>
<text x="699.21" y="203.48" font-size="10.8" fill="#5e5e5e" font-weight="normal" textLength="34.05" lengthAdjust="spacingAndGlyphs"  >Copiers</text>
<rect x="683.5" y="209.5" width="11" height="11" rx="1.6" fill="#fff" stroke="#666" stroke-width="1"/>
<path d="M686.2 215.4 L688.2 217.5 L691.7 212.3" fill="none" stroke="#4a4a4a" stroke-width="1.35" stroke-linejoin="round"/>
<text x="698.91" y="218.42" font-size="10.8" fill="#5e5e5e" font-weight="normal" textLength="46.03" lengthAdjust="spacingAndGlyphs"  >Envelopes</text>
<rect x="683.5" y="223.5" width="11" height="11" rx="1.6" fill="#fff" stroke="#666" stroke-width="1"/>
<path d="M686.2 229.4 L688.2 231.5 L691.7 226.3" fill="none" stroke="#4a4a4a" stroke-width="1.35" stroke-linejoin="round"/>
<text x="698.89" y="233.36" font-size="10.8" fill="#5e5e5e" font-weight="normal" textLength="44.87" lengthAdjust="spacingAndGlyphs"  >Fasteners</text>
<rect x="683.5" y="238.5" width="11" height="11" rx="1.6" fill="#fff" stroke="#666" stroke-width="1"/>
<path d="M686.2 244.4 L688.2 246.5 L691.7 241.3" fill="none" stroke="#4a4a4a" stroke-width="1.35" stroke-linejoin="round"/>
<text x="698.88" y="248.3" font-size="10.8" fill="#5e5e5e" font-weight="normal" textLength="52.87" lengthAdjust="spacingAndGlyphs"  >Furnishings</text>
<rect x="683.5" y="253.5" width="11" height="11" rx="1.6" fill="#fff" stroke="#666" stroke-width="1"/>
<path d="M686.2 259.4 L688.2 261.5 L691.7 256.3" fill="none" stroke="#4a4a4a" stroke-width="1.35" stroke-linejoin="round"/>
<text x="698.91" y="263.24" font-size="10.8" fill="#5e5e5e" font-weight="normal" textLength="29.16" lengthAdjust="spacingAndGlyphs"  >Labels</text>
<rect x="683.5" y="268.5" width="11" height="11" rx="1.6" fill="#fff" stroke="#666" stroke-width="1"/>
<path d="M686.2 274.4 L688.2 276.5 L691.7 271.3" fill="none" stroke="#4a4a4a" stroke-width="1.35" stroke-linejoin="round"/>
<text x="698.90" y="278.18" font-size="10.8" fill="#5e5e5e" font-weight="normal" textLength="43.06" lengthAdjust="spacingAndGlyphs"  >Machines</text>
<rect x="683.5" y="283.5" width="11" height="11" rx="1.6" fill="#fff" stroke="#666" stroke-width="1"/>
<path d="M686.2 289.4 L688.2 291.5 L691.7 286.3" fill="none" stroke="#4a4a4a" stroke-width="1.35" stroke-linejoin="round"/>
<text x="698.91" y="293.12" font-size="10.8" fill="#5e5e5e" font-weight="normal" textLength="26.48" lengthAdjust="spacingAndGlyphs"  >Paper</text>
<rect x="683.5" y="298.5" width="11" height="11" rx="1.6" fill="#fff" stroke="#666" stroke-width="1"/>
<path d="M686.2 304.4 L688.2 306.5 L691.7 301.3" fill="none" stroke="#4a4a4a" stroke-width="1.35" stroke-linejoin="round"/>
<text x="698.92" y="308.06" font-size="10.8" fill="#5e5e5e" font-weight="normal" textLength="33.14" lengthAdjust="spacingAndGlyphs"  >Phones</text>
<rect x="683.5" y="313.5" width="11" height="11" rx="1.6" fill="#fff" stroke="#666" stroke-width="1"/>
<path d="M686.2 319.4 L688.2 321.5 L691.7 316.3" fill="none" stroke="#4a4a4a" stroke-width="1.35" stroke-linejoin="round"/>
<text x="699.24" y="323.0" font-size="10.8" fill="#5e5e5e" font-weight="normal" textLength="35.95" lengthAdjust="spacingAndGlyphs"  >Storage</text>
<rect x="683.5" y="328.5" width="11" height="11" rx="1.6" fill="#fff" stroke="#666" stroke-width="1"/>
<path d="M686.2 334.4 L688.2 336.5 L691.7 331.3" fill="none" stroke="#4a4a4a" stroke-width="1.35" stroke-linejoin="round"/>
<text x="699.25" y="337.94" font-size="10.8" fill="#5e5e5e" font-weight="normal" textLength="38.41" lengthAdjust="spacingAndGlyphs"  >Supplies</text>
<rect x="683.5" y="343.5" width="11" height="11" rx="1.6" fill="#fff" stroke="#666" stroke-width="1"/>
<path d="M686.2 349.4 L688.2 351.5 L691.7 346.3" fill="none" stroke="#4a4a4a" stroke-width="1.35" stroke-linejoin="round"/>
<text x="699.45" y="352.88" font-size="10.8" fill="#5e5e5e" font-weight="normal" textLength="28.91" lengthAdjust="spacingAndGlyphs"  >Tables</text>
<rect x="683.5" y="394.5" width="11" height="11" rx="1.6" fill="#fff" stroke="#666" stroke-width="1"/>
<path d="M686.2 400.4 L688.2 402.5 L691.7 397.3" fill="none" stroke="#4a4a4a" stroke-width="1.35" stroke-linejoin="round"/>
<text x="699.02" y="403.3" font-size="10.8" fill="#5e5e5e" font-weight="normal" textLength="20.08" lengthAdjust="spacingAndGlyphs"  >(All)</text>
<rect x="683.5" y="409.5" width="11" height="11" rx="1.6" fill="#fff" stroke="#666" stroke-width="1"/>
<path d="M686.2 415.4 L688.2 417.5 L691.7 412.3" fill="none" stroke="#4a4a4a" stroke-width="1.35" stroke-linejoin="round"/>
<text x="699.17" y="418.25" font-size="10.8" fill="#5e5e5e" font-weight="normal" textLength="23.56" lengthAdjust="spacingAndGlyphs"  >2022</text>
<rect x="683.5" y="424.5" width="11" height="11" rx="1.6" fill="#fff" stroke="#666" stroke-width="1"/>
<path d="M686.2 430.4 L688.2 432.5 L691.7 427.3" fill="none" stroke="#4a4a4a" stroke-width="1.35" stroke-linejoin="round"/>
<text x="699.17" y="433.2" font-size="10.8" fill="#5e5e5e" font-weight="normal" textLength="23.50" lengthAdjust="spacingAndGlyphs"  >2023</text>
<rect x="683.5" y="439.5" width="11" height="11" rx="1.6" fill="#fff" stroke="#666" stroke-width="1"/>
<path d="M686.2 445.4 L688.2 447.5 L691.7 442.3" fill="none" stroke="#4a4a4a" stroke-width="1.35" stroke-linejoin="round"/>
<text x="699.18" y="448.15" font-size="10.8" fill="#5e5e5e" font-weight="normal" textLength="23.34" lengthAdjust="spacingAndGlyphs"  >2024</text>
<rect x="683.5" y="454.5" width="11" height="11" rx="1.6" fill="#fff" stroke="#666" stroke-width="1"/>
<path d="M686.2 460.4 L688.2 462.5 L691.7 457.3" fill="none" stroke="#4a4a4a" stroke-width="1.35" stroke-linejoin="round"/>
<text x="699.17" y="463.1" font-size="10.8" fill="#5e5e5e" font-weight="normal" textLength="23.45" lengthAdjust="spacingAndGlyphs"  >2025</text>
</svg></body></html>
